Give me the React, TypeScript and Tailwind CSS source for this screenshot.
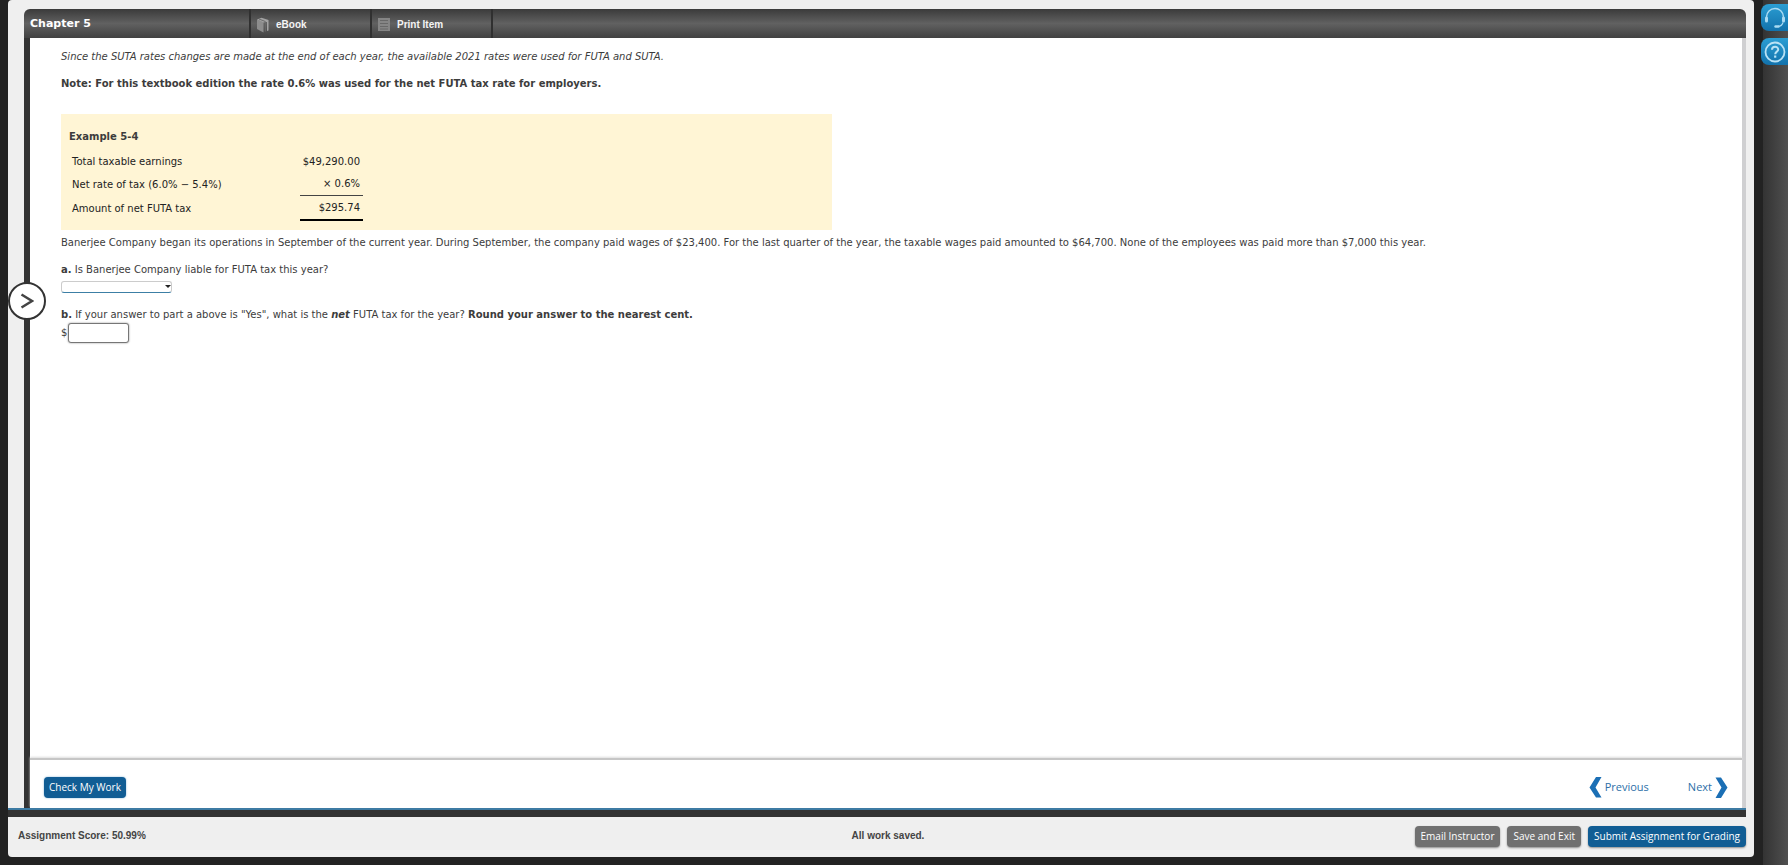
import React from "react";

function BookIcon() {
  return (
    <svg width="12" height="16" viewBox="0 0 12 16" aria-hidden="true">
      <path d="M0 2.500 6.500 5v10.500L0 12z" fill="#8d8d8d" />
      <path d="M0 2.500 4.500 .8 11.500 3v10.500l-1.500.5V5L6.500 5.500z" fill="#a3a3a3" />
      <path d="M2 2 8.300 4.500v10" fill="none" stroke="#6b6b6b" />
    </svg>
  );
}

function PrintIcon() {
  return (
    <svg width="12" height="15" viewBox="0 0 12 15" aria-hidden="true">
      <path d="M0 1h12v13H0z" fill="#858585" />
      <path d="M2 3.500h8M2 6.500h8M2 9.500h8M2 12h8" stroke="#686868" />
    </svg>
  );
}

function HeadsetIcon() {
  return (
    <svg width="22" height="22" viewBox="0 0 22 22" fill="none" stroke="#a9daf2" aria-hidden="true">
      <path d="M2.500 11.500V10a8.500 8.500 0 0 1 17 0v1.500" strokeWidth="1.500" />
      <path d="M2.500 11v3M19.500 11v3" strokeWidth="3" strokeLinecap="round" />
      <path d="M19 15.500c-.8 2.600-2.600 3.800-5 4" strokeWidth="1.200" />
      <path d="M11.500 19.500h3" strokeWidth="2.400" strokeLinecap="round" />
    </svg>
  );
}

function HelpIcon() {
  return (
    <svg width="22" height="22" viewBox="0 0 22 22" fill="none" stroke="#b9e2f5" aria-hidden="true">
      <circle cx="11" cy="11" r="9.500" strokeWidth="1.800" />
      <path d="M8 8.800c0-4 6.200-3.800 6.200-.4 0 2.200-3 2.300-3 4.800" strokeWidth="2" />
      <path d="M11.200 14.500v2.200" strokeWidth="2.200" />
    </svg>
  );
}

function Chevron({ flip = false }: { flip?: boolean }) {
  return (
    <svg width="13" height="21" viewBox="0 0 13 21" aria-hidden="true" className={flip ? "rotate-180" : ""}>
      <path d="M7 0h5.500L6.500 10.500l6 10H7l-6.500-10z" fill="#1b6fb5" />
    </svg>
  );
}

const tab =
  "flex h-full w-[121px] items-center gap-[7px] border-l-2 border-[#303030] pt-[2px] pl-[6px] font-['Liberation_Sans',sans-serif] text-[10px] font-bold text-[#f4f4f4]";
const action =
  "h-[21px] whitespace-nowrap rounded px-[6px] font-['Open_Sans',sans-serif] text-[10px] leading-[21px] text-white shadow-[0_1px_2px_rgba(0,0,0,0.4)]";

export default function App() {
  return (
    <div className="flex h-screen min-h-[480px] bg-[#222222] pl-2 font-['DejaVu_Sans',sans-serif] text-[10px] leading-[14px] text-[#3c3c3c]">
      <div className="mb-2 flex min-w-0 flex-1 flex-col rounded-sm bg-[#efefef] pt-[9px]">
        <div className="relative mr-2 flex min-h-0 flex-1 flex-col">
          <header className="ml-4 flex h-[29px] shrink-0 items-center rounded-t-md bg-linear-to-b from-[#3b3b3b] via-[#616161] to-[#414141]">
            <h1 className="w-[225px] pl-[6px] text-[11px] font-bold text-white">Chapter 5</h1>
            <a href="#ebook" className={tab}>
              <BookIcon />
              eBook
            </a>
            <a href="#print" className={tab}>
              <PrintIcon />
              Print Item
            </a>
            <span className="h-full border-l-2 border-[#303030]" />
          </header>

          <div className="ml-4 flex min-h-0 flex-1 flex-col border-r-4 border-l-[6px] border-r-[#cfcfd1] border-l-[#333333] bg-white">
            <main className="min-h-0 flex-1 overflow-auto pt-3 pl-[31px]">
              <p className="mb-[13px] italic">
                Since the SUTA rates changes are made at the end of each year, the available 2021 rates were used for FUTA and SUTA.
              </p>
              <p className="font-bold">
                Note: For this textbook edition the rate 0.6% was used for the net FUTA tax rate for employers.
              </p>

              <section className="mt-[23px] h-[116px] w-[771px] max-w-full bg-[#fff5d5] px-2 pt-4">
                <h2 className="font-bold">Example 5-4</h2>
                <table className="mt-[7px] border-separate border-spacing-0 text-[#222222]">
                  <tbody>
                    <tr className="h-[22px]">
                      <td className="w-[231px] pl-[3px]">Total taxable earnings</td>
                      <td className="w-[63px] pr-[3px] text-right">$49,290.00</td>
                    </tr>
                    <tr className="h-[23px]">
                      <td className="pl-[3px]">Net rate of tax (6.0% − 5.4%)</td>
                      <td className="border-b border-[#444444] pr-[3px] text-right">× 0.6%</td>
                    </tr>
                    <tr className="h-[25px]">
                      <td className="pl-[3px]">Amount of net FUTA tax</td>
                      <td className="border-b-2 border-black pr-[3px] text-right">$295.74</td>
                    </tr>
                  </tbody>
                </table>
              </section>

              <p className="mt-[6px] mb-[13px]">
                Banerjee Company began its operations in September of the current year. During September, the company paid wages of $23,400. For the last quarter of the year, the taxable wages paid amounted to $64,700. None of the employees was paid more than $7,000 this year.
              </p>
              <label htmlFor="liable" className="block">
                <b>a.</b> Is Banerjee Company liable for FUTA tax this year?
              </label>
              <div className="relative mt-1 w-[111px]">
                <select
                  id="liable"
                  className="block h-[12px] w-full appearance-none rounded-[3px] border border-[#cccccc] border-b-[#3c7fa5] bg-white"
                >
                  <option></option>
                  <option>Yes</option>
                  <option>No</option>
                </select>
                <svg width="6" height="3" viewBox="0 0 6 3" aria-hidden="true" className="pointer-events-none absolute top-1 right-[1px]">
                  <path d="M0 0h6L3 3z" fill="#222" />
                </svg>
              </div>
              <label htmlFor="amount" className="mt-[15px] block">
                <b>b.</b> If your answer to part a above is "Yes", what is the <b className="italic">net</b> FUTA tax for the year?{" "}
                <b>Round your answer to the nearest cent.</b>
              </label>
              <div className="mt-px flex items-center">
                <span className="w-[7px]">$</span>
                <input
                  id="amount"
                  type="text"
                  className="h-[20px] w-[61px] rounded-[3px] border border-[#767676] bg-white px-1 shadow-[0_0_2px_#888888]"
                />
              </div>
            </main>

            <div className="flex h-[50px] shrink-0 items-center justify-between border-t-2 border-[#c6c6c6] px-[14px] pt-[6px] shadow-[0_-1px_2px_#dddddd]">
              <button
                type="button"
                className="h-[21px] rounded bg-[#115d94] px-[5px] font-['Open_Sans',sans-serif] text-[10px] font-medium text-white shadow-[0_0_2px_#7db0d5]"
              >
                Check My Work
              </button>
              <nav className="flex gap-[39px] font-['Open_Sans',sans-serif] text-[11px] text-[#2d6fa8]">
                <a href="#previous" className="flex items-center gap-[3px]">
                  <Chevron />
                  Previous
                </a>
                <a href="#next" className="flex items-center gap-[3px]">
                  Next
                  <Chevron flip />
                </a>
              </nav>
            </div>
          </div>
          <div className="h-[9px] shrink-0 border-t-2 border-[#3d7ba3] bg-[#333333]" />

          <button
            type="button"
            aria-label="Expand navigation"
            className="absolute top-[273px] left-0 flex size-[38px] items-center justify-center rounded-full border-2 border-[#333333] bg-white"
          >
            <svg width="14" height="16" viewBox="0 0 14 16" fill="none" aria-hidden="true">
              <path d="M1.500 1.500 12 8 1.500 14.500" stroke="#444" strokeWidth="2.500" />
            </svg>
          </button>
        </div>

        <footer className="grid h-[40px] shrink-0 grid-cols-[1fr_auto_1fr] items-center pr-2 pb-[2px] pl-[10px] font-['Liberation_Sans',sans-serif] text-[10px] font-bold text-[#444444]">
          <span>Assignment Score: 50.99%</span>
          <span className="pl-3">All work saved.</span>
          <div className="flex justify-end gap-[7px] font-normal">
            <button type="button" className={`${action} bg-[#707070]`}>Email Instructor</button>
            <button type="button" className={`${action} bg-[#707070]`}>Save and Exit</button>
            <button type="button" className={`${action} bg-[#115d94]`}>Submit Assignment for Grading</button>
          </div>
        </footer>
      </div>

      <aside className="ml-[9px] flex w-[25px] shrink-0 flex-col items-end gap-[7px] bg-linear-to-r from-[#333333] to-[#505050] pt-1">
        <button type="button" aria-label="Support" className="flex h-[27px] w-[27px] items-center justify-center rounded-l-lg bg-linear-to-b from-[#2b9ed3] to-[#1272ac]">
          <HeadsetIcon />
        </button>
        <button type="button" aria-label="Help" className="flex h-[27px] w-[27px] items-center justify-center rounded-l-lg bg-linear-to-b from-[#2b9ed3] to-[#1272ac]">
          <HelpIcon />
        </button>
      </aside>
    </div>
  );
}
